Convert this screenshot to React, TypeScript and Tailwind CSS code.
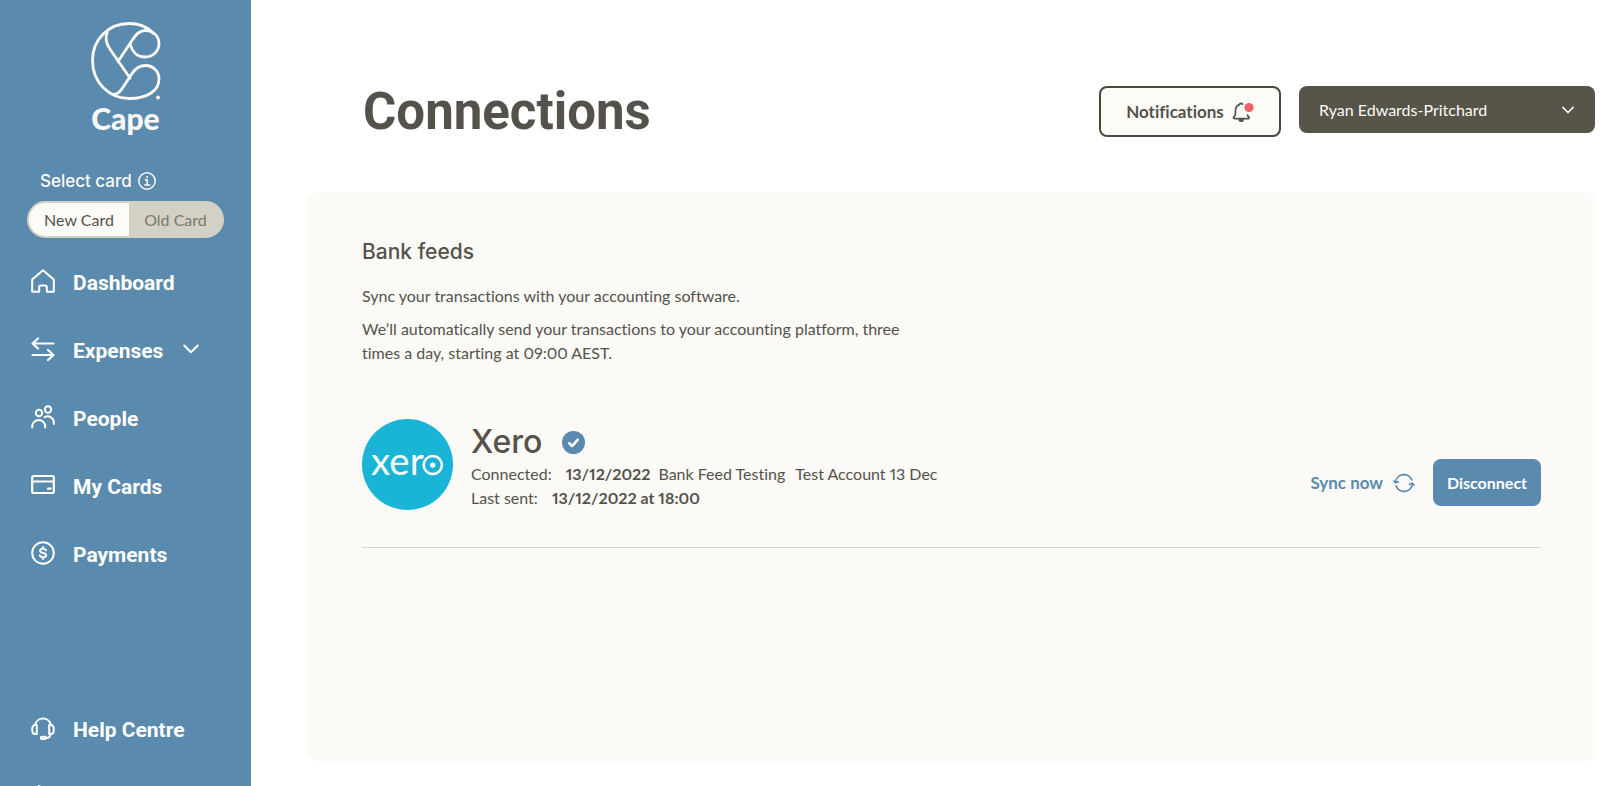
import React, { useState } from 'react';

type IconProps = { className?: string };

const stroke = {
  fill: 'none',
  stroke: 'currentColor',
  strokeWidth: 2,
  strokeLinecap: 'round' as const,
  strokeLinejoin: 'round' as const,
};

const HomeIcon = () => (
  <svg viewBox="0 0 24 24" className="size-6" {...stroke}>
    <path d="M1.200 10.500 12 1.200l10.800 9.300V22.800h-7v-4.800a1.500 1.500 0 0 0-1.500-1.500H9.700a1.500 1.500 0 0 0-1.500 1.500v4.800h-7z" />
  </svg>
);

const TransferIcon = () => (
  <svg viewBox="0 0 24 24" className="size-6" {...stroke} strokeWidth={2.200}>
    <path d="M22.500 6.500H1.500M7 1.500l-5.500 5L7 11.500M1.500 18h21M17 13l5.500 5-5.500 5" />
  </svg>
);

const PeopleIcon = () => (
  <svg viewBox="0 0 24 24" className="size-6" {...stroke}>
    <circle cx="8" cy="8" r="3.200" />
    <circle cx="17" cy="4.500" r="3.200" />
    <path d="M1.200 22.500v-1a6.500 6.500 0 0 1 13 0v1M13.500 12.300a6 6 0 0 1 9.300 5v1.700" />
  </svg>
);

const CardIcon = () => (
  <svg viewBox="0 0 24 24" className="size-6" {...stroke} strokeWidth={2.200}>
    <rect x="1.200" y="3" width="21.600" height="17" rx="1.500" />
    <path d="M1.200 8.500h21.600M17 15.700h2.500" />
  </svg>
);

const DollarIcon = () => (
  <svg viewBox="0 0 24 24" className="size-6" {...stroke}>
    <circle cx="12" cy="12" r="10.800" />
    <path d="M15 9.300c-.5-1.100-1.600-1.500-3-1.500-1.700 0-2.900.7-2.900 2 0 3 6 1.400 6 4.400 0 1.300-1.300 2-3.100 2-1.500 0-2.700-.5-3.200-1.700M12 6v1.800M12 16.200V18" />
  </svg>
);

const HeadsetIcon = () => (
  <svg viewBox="0 0 24 24" className="size-6" {...stroke}>
    <path d="M4.200 8.700a8 8 0 0 1 15.600 0M19.500 18c0 2.500-1.500 4-4.500 4" />
    <path d="M5.800 9H4.200C2.300 9 1.200 10.300 1.200 13.500S2.300 18 4.200 18h1.600zM18.200 9h1.600c1.900 0 3 1.300 3 4.500S21.700 18 19.800 18h-1.600z" />
    <rect x="9.800" y="20.800" width="5" height="2.200" rx="1" />
  </svg>
);

const LogoutIcon = () => (
  <svg viewBox="0 0 24 24" className="size-6" {...stroke}>
    <path d="M8 2 1.500 6v16h13v-5M8 2l6.500 4M9 12h13.500M18 7.500l4.500 4.500-4.500 4.500" />
  </svg>
);

const ChevronIcon = ({ className }: IconProps) => (
  <svg viewBox="0 0 16 10" className={className} {...stroke}>
    <path d="m1.200 1.500 6.800 6.800 6.800-6.800" />
  </svg>
);

const InfoIcon = () => (
  <svg viewBox="0 0 18 18" className="size-[18px]" {...stroke} strokeWidth={1.5}>
    <circle cx="9" cy="9" r="8.200" />
    <path d="M7.300 7.700H9.200v5M6.700 12.900h5" />
    <circle cx="9" cy="4.900" r=".6" fill="currentColor" strokeWidth={0.8} />
  </svg>
);

const BellIcon = () => (
  <svg viewBox="0 0 22 20" className="h-5 w-[22px]" {...stroke} strokeWidth={1.7}>
    <path d="M7.500 2.600a1.600 1.600 0 0 1 3-.4M7.500 2.600C4.500 3.600 3.400 6 3.400 8.900v3.300c0 1-.6 1.700-1.500 2.700-.8.900-.5 1.700.4 1.700h13.900c1.100 0 1.200-.9.500-1.700-.5-.6-.9-1.100-1.200-1.800" />
    <path d="M7.200 17.200a2 2 0 0 0 4 0z" fill="currentColor" />
    <circle cx="17" cy="5.500" r="4.600" fill="#f06464" stroke="none" />
  </svg>
);

const SyncIcon = () => (
  <svg viewBox="0 0 22 20" className="h-5 w-[22px]" {...stroke} strokeWidth={1.7}>
    <path d="M2.600 9.500a8.400 8.400 0 0 1 16.200-2.600M19.400 10.500A8.400 8.400 0 0 1 3.200 13.100" />
    <path d="m.9 8 1.700 1.600 2.800-.8M21.100 12l-1.700-1.600-2.800.8" />
  </svg>
);

const CapeLogo = () => (
  <svg viewBox="0 0 70 78" className="h-[78px] w-[70px]" {...stroke} strokeWidth={2.8}>
    <path d="M54.500 8.500C62.500 8.500 68 14.500 68 21.500S62.500 35 54 35C46 35 41 29.500 39.300 22.500" />
    <path d="M62 11C56 4.500 47.500 1.500 38 1.500 17 1.500 1.500 18 1.500 38.500 1.500 60.500 18 76.500 38.500 76.500 56 76.500 68 69 68 57c0-7.500-5.500-13.500-13.500-13.500-6.500 0-10.500 3.500-13.500 8L33.500 63C29 70.500 25.500 73.500 20.500 72" />
    <path d="M16.300 10c-2.500 6.400-1.300 11.700 2.700 17.200L39 56" />
    <path d="M27 39.500 41 18.500C44.500 12.500 48 8.500 54.500 8.500" />
    <circle cx="67" cy="75.500" r="1.500" strokeWidth={1} fill="currentColor" />
  </svg>
);

const XeroLogo = () => (
  <svg viewBox="0 0 90 90" className="size-[91px] shrink-0" role="img" aria-label="Xero logo">
    <circle cx="45" cy="45" r="45" fill="#1ab4d7" />
    <text x="9" y="55" fontSize="38" fill="#fff" className="font-['Lato',sans-serif]">
      xer
    </text>
    <circle cx="70" cy="45.500" r="9" fill="none" stroke="#fff" strokeWidth={2.500} />
    <circle cx="70" cy="45.500" r="2.600" fill="#fff" />
  </svg>
);

const VerifiedIcon = () => (
  <svg viewBox="0 0 24 24" className="size-[23px]" role="img" aria-label="Connected">
    <circle cx="12" cy="12" r="12" fill="#5a8aae" />
    <path d="m7.500 12.700 3 3 6-6.700" {...stroke} stroke="#fff" strokeWidth={2.600} />
  </svg>
);

const navItems = [
  { label: 'Dashboard', icon: <HomeIcon /> },
  { label: 'Expenses', icon: <TransferIcon />, expandable: true },
  { label: 'People', icon: <PeopleIcon /> },
  { label: 'My Cards', icon: <CardIcon /> },
  { label: 'Payments', icon: <DollarIcon /> },
];

type NavItemProps = { label: string; icon: React.ReactNode; expandable?: boolean };

const NavItem: React.FC<NavItemProps> = ({ label, icon, expandable }) => (
  <a href="#" className="flex h-[68px] items-center pb-1 pl-[31px] text-white">
    {icon}
    <span className="ml-[18px] pt-1 font-['Roboto',sans-serif] text-[21px] font-bold leading-7">{label}</span>
    {expandable && <ChevronIcon className="ml-5 h-[10px] w-4" />}
  </a>
);

const Sidebar: React.FC = () => {
  const [card, setCard] = useState('new');

  return (
    <aside className="flex w-[251px] shrink-0 flex-col overflow-hidden bg-[#5a8aae] text-[#fcfaf6]">
      <a href="#" className="mt-[22px] flex flex-col items-center">
        <CapeLogo />
        <span className="text-[30px] font-black leading-9">Cape</span>
      </a>
      <div className="mt-[31px] flex items-center gap-[6px] pl-10 leading-7">
        <span id="card-label" className="font-['Inter',sans-serif] text-[17px] font-medium">Select card</span>
        <InfoIcon />
      </div>
      <div
        role="group"
        aria-labelledby="card-label"
        className="ml-[27px] mt-[6px] flex h-[37px] w-[197px] shrink-0 overflow-hidden rounded-full border-2 border-[#d3d0c6] bg-[#d3d0c6] text-base"
      >
        <button
          type="button"
          aria-pressed={card === 'new'}
          onClick={() => setCard('new')}
          className="w-[100px] bg-[#fcfbf7] text-[#55524a]"
        >
          New Card
        </button>
        <button
          type="button"
          aria-pressed={card === 'old'}
          onClick={() => setCard('old')}
          className="flex-1 text-[#7d796c]"
        >
          Old Card
        </button>
      </div>
      <nav className="mt-[11px] flex min-h-0 flex-1 flex-col">
        {navItems.map((item) => (
          <NavItem key={item.label} {...item} />
        ))}
        <div className="mt-auto h-[90px] shrink-0">
          <NavItem label="Help Centre" icon={<HeadsetIcon />} />
          <a href="#" aria-label="Log out" className="flex h-[68px] items-center pb-1 pl-[31px] text-white">
            <LogoutIcon />
          </a>
        </div>
      </nav>
    </aside>
  );
};

const Header: React.FC = () => (
  <header className="flex items-start pl-[55px]">
    <h1 className="flex-1 font-['Roboto',sans-serif] text-[51px] font-bold leading-[52px]">Connections</h1>
    <button
      type="button"
      className="flex h-[51px] w-[182px] items-center justify-center gap-2 rounded-lg border-2 border-[#4b483c] bg-[#fcfbf7] text-[17px] font-bold"
    >
      Notifications
      <BellIcon />
    </button>
    <div className="relative ml-[18px] w-[296px]">
      <select
        aria-label="Account"
        className="h-[47px] w-full appearance-none rounded-lg bg-[#57544a] px-5 text-base text-[#fcfbf7]"
      >
        <option>Ryan Edwards-Pritchard</option>
      </select>
      <ChevronIcon className="pointer-events-none absolute right-[21px] top-5 h-2 w-3 text-white" />
    </div>
  </header>
);

const XeroConnection: React.FC = () => (
  <div className="flex items-end border-b border-[#d6d5d1] pb-[37px]">
    <XeroLogo />
    <div className="ml-[18px] flex-1">
      <div className="flex items-center gap-5">
        <h3 className="font-['Inter',sans-serif] text-[32px] font-medium leading-10">Xero</h3>
        <VerifiedIcon />
      </div>
      <p>
        Connected: <b className="ml-[10px]">13/12/2022</b>
        <span className="ml-2">Bank Feed Testing</span>
        <span className="ml-[10px]">Test Account 13 Dec</span>
      </p>
      <p>
        Last sent: <b className="ml-[10px]">13/12/2022 at 18:00</b>
      </p>
    </div>
    <div className="flex items-center gap-[18px] pb-1">
      <button type="button" className="flex items-center gap-[10px] text-[17px] font-bold text-[#5a8aae]">
        Sync now
        <SyncIcon />
      </button>
      <button type="button" className="h-[47px] w-[108px] rounded-lg bg-[#5a8aae] font-bold text-white">
        Disconnect
      </button>
    </div>
  </div>
);

export default function App() {
  return (
    <div className="flex h-screen overflow-hidden bg-white font-['Lato',sans-serif] text-base text-[#55524c] proportional-nums [font-variant-ligatures:none]">
      <Sidebar />
      <main className="flex min-w-0 flex-1 flex-col pb-[25px] pl-[57px] pr-[5px] pt-[86px]">
        <Header />
        <section className="mt-[54px] flex-1 rounded-lg bg-[#fbfaf6] px-[54px] pt-[46px]">
          <h2 className="font-['Inter',sans-serif] text-[21px] font-medium leading-7">Bank feeds</h2>
          <div className="mb-[54px] mt-[18px] max-w-[560px] space-y-[9px] leading-6">
            <p>Sync your transactions with your accounting software.</p>
            <p>
              We’ll automatically send your transactions to your accounting platform, three times a day, starting at
              09:00 AEST.
            </p>
          </div>
          <XeroConnection />
        </section>
      </main>
    </div>
  );
}
